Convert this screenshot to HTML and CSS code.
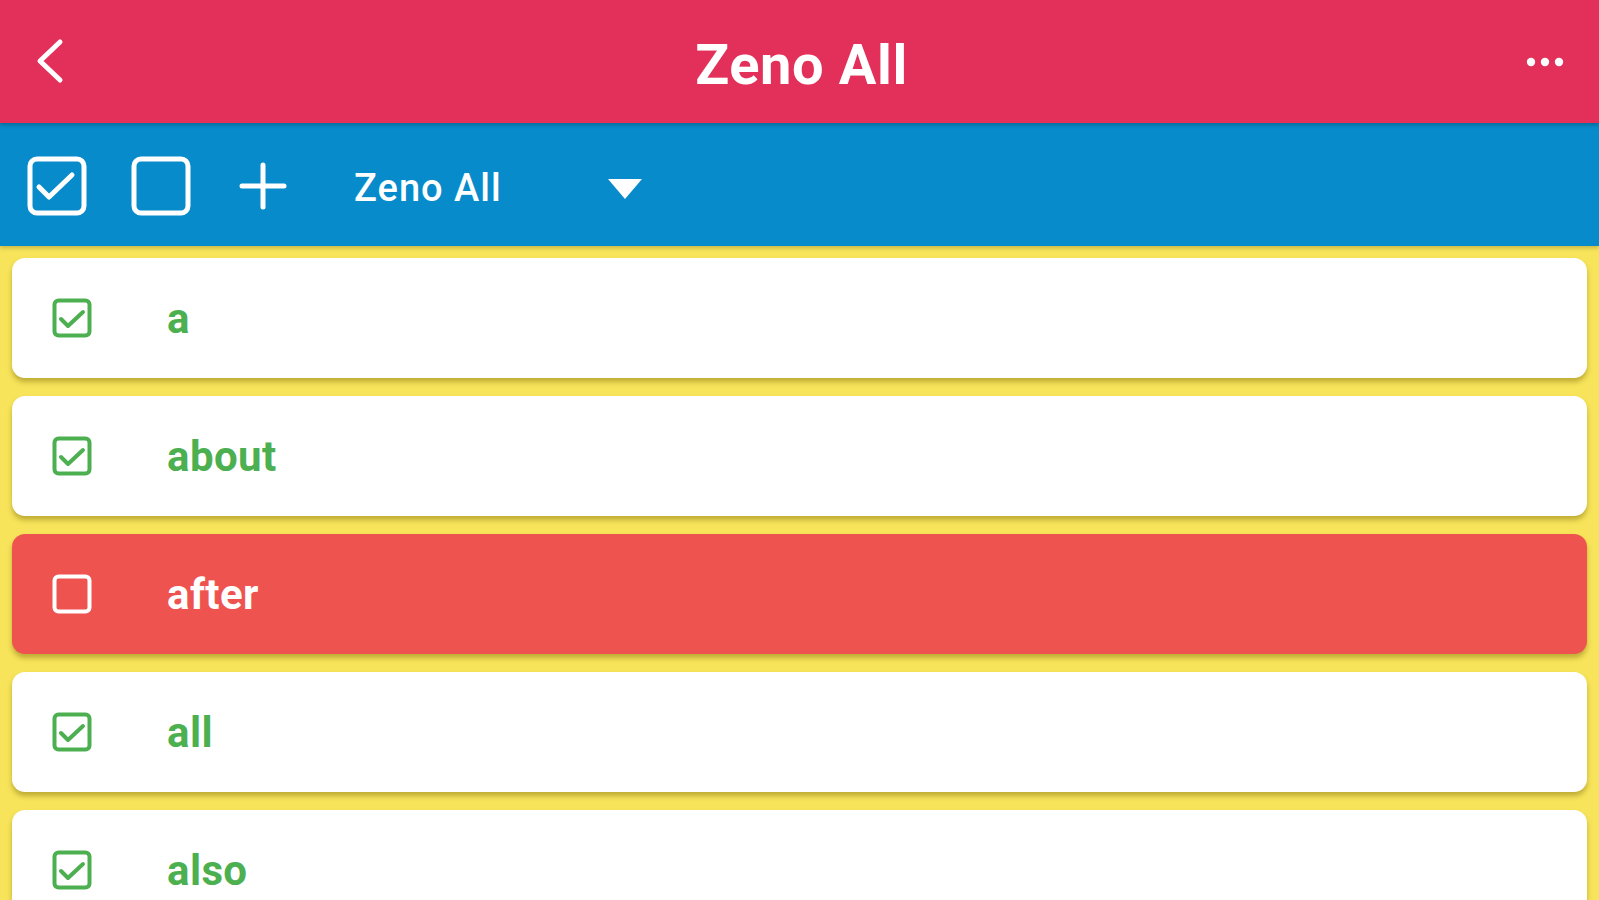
FILE: index.html
```html
<!DOCTYPE html>
<html lang="en">
<head>
<meta charset="utf-8">
<title>Zeno All</title>
<link rel="stylesheet" href="styles.css">
</head>
<body>
<div class="app">
  <header class="navbar">
    <button class="nav-btn back" aria-label="Back">
      <svg width="30" height="46" viewBox="0 0 30 46"><polyline points="25,4 5,23 25,42" fill="none" stroke="#fff" stroke-width="5" stroke-linecap="round" stroke-linejoin="round"/></svg>
    </button>
    <h1 class="title">Zeno All</h1>
    <button class="nav-btn more" aria-label="More">
      <svg width="38" height="12" viewBox="0 0 38 12"><circle cx="5" cy="6" r="4.2" fill="#fff"/><circle cx="19" cy="6" r="4.2" fill="#fff"/><circle cx="33" cy="6" r="4.2" fill="#fff"/></svg>
    </button>
  </header>

  <div class="toolbar">
    <button class="tool-btn" aria-label="Check all">
      <svg width="60" height="60" viewBox="0 0 60 60"><rect x="3" y="3" width="54" height="54" rx="7" fill="none" stroke="#fff" stroke-width="5"/><polyline points="12,31 22,41 45,19" fill="none" stroke="#fff" stroke-width="5" stroke-linecap="round" stroke-linejoin="round"/></svg>
    </button>
    <button class="tool-btn" aria-label="Uncheck all">
      <svg width="60" height="60" viewBox="0 0 60 60"><rect x="3" y="3" width="54" height="54" rx="7" fill="none" stroke="#fff" stroke-width="5"/></svg>
    </button>
    <button class="tool-btn plus" aria-label="Add">
      <svg width="48" height="48" viewBox="0 0 48 48"><line x1="24" y1="3" x2="24" y2="45" stroke="#fff" stroke-width="5" stroke-linecap="round"/><line x1="3" y1="24" x2="45" y2="24" stroke="#fff" stroke-width="5" stroke-linecap="round"/></svg>
    </button>
    <div class="select">
      <span class="select-label">Zeno All</span>
      <svg class="caret" width="36" height="22" viewBox="0 0 36 22"><polygon points="1,1 35,1 18,21" fill="#fff"/></svg>
    </div>
  </div>

  <main class="list">
    <div class="item done">
      <svg class="box" width="40" height="40" viewBox="0 0 40 40"><rect x="2.5" y="2.5" width="35" height="35" rx="4" fill="none" stroke="currentColor" stroke-width="4"/><polyline points="9,21 16,28 31,14" fill="none" stroke="currentColor" stroke-width="4" stroke-linecap="round" stroke-linejoin="round"/></svg>
      <span class="word">a</span>
    </div>
    <div class="item done">
      <svg class="box" width="40" height="40" viewBox="0 0 40 40"><rect x="2.5" y="2.5" width="35" height="35" rx="4" fill="none" stroke="currentColor" stroke-width="4"/><polyline points="9,21 16,28 31,14" fill="none" stroke="currentColor" stroke-width="4" stroke-linecap="round" stroke-linejoin="round"/></svg>
      <span class="word">about</span>
    </div>
    <div class="item todo">
      <svg class="box" width="40" height="40" viewBox="0 0 40 40"><rect x="2.5" y="2.5" width="35" height="35" rx="4" fill="none" stroke="currentColor" stroke-width="4"/></svg>
      <span class="word">after</span>
    </div>
    <div class="item done">
      <svg class="box" width="40" height="40" viewBox="0 0 40 40"><rect x="2.5" y="2.5" width="35" height="35" rx="4" fill="none" stroke="currentColor" stroke-width="4"/><polyline points="9,21 16,28 31,14" fill="none" stroke="currentColor" stroke-width="4" stroke-linecap="round" stroke-linejoin="round"/></svg>
      <span class="word">all</span>
    </div>
    <div class="item done">
      <svg class="box" width="40" height="40" viewBox="0 0 40 40"><rect x="2.5" y="2.5" width="35" height="35" rx="4" fill="none" stroke="currentColor" stroke-width="4"/><polyline points="9,21 16,28 31,14" fill="none" stroke="currentColor" stroke-width="4" stroke-linecap="round" stroke-linejoin="round"/></svg>
      <span class="word">also</span>
    </div>
  </main>
</div>
</body>
</html>
```

FILE: styles.css
```css
* { box-sizing: border-box; }

html, body {
  margin: 0;
  padding: 0;
  height: 100%;
}

body {
  font-family: Roboto, "Noto Sans", "Liberation Sans", sans-serif;
  background: #f7e45a;
  overflow: hidden;
}

.app {
  display: flex;
  flex-direction: column;
  height: 900px;
}

button {
  background: none;
  border: 0;
  padding: 0;
  margin: 0;
  cursor: pointer;
  display: flex;
  align-items: center;
  justify-content: center;
}

.navbar {
  height: 123px;
  flex: none;
  background: #e2305a;
  display: flex;
  align-items: center;
  justify-content: space-between;
  padding: 0 35px 0 35px;
  position: relative;
  z-index: 2;
  box-shadow: 0 2px 4px rgba(0, 0, 0, 0.25);
}

.nav-btn.back {
  width: 38px;
  height: 46px;
  margin-top: -1px;
  justify-content: flex-start;
}

.nav-btn.more {
  width: 38px;
  height: 12px;
  margin-top: 1px;
}

.title {
  margin: 6px 0 0 0;
  color: #fff;
  font-size: 56px;
  font-weight: 700;
  letter-spacing: 0.6px;
  flex: 1;
  text-align: center;
  line-height: 1;
  padding-left: 4px;
}

.toolbar {
  height: 123px;
  flex: none;
  background: #078bcb;
  display: flex;
  align-items: center;
  padding: 2px 0 0 27px;
  position: relative;
  z-index: 1;
  box-shadow: 0 2px 4px rgba(0, 0, 0, 0.2);
}

.tool-btn {
  width: 60px;
  height: 60px;
  margin-right: 44px;
}

.tool-btn.plus {
  width: 48px;
  height: 48px;
  margin-left: 4px;
  margin-right: 67px;
}

.select {
  display: flex;
  align-items: center;
  color: #fff;
}

.select-label {
  font-size: 38px;
  font-weight: 500;
  letter-spacing: 1px;
  width: 253px;
  margin-top: 4px;
}

.caret {
  margin-top: 6px;
}

.list {
  flex: 1;
  padding: 12px 12px 0 12px;
  display: flex;
  flex-direction: column;
  gap: 18px;
  overflow: hidden;
}

.item {
  flex: none;
  height: 120px;
  border-radius: 13px;
  background: #fff;
  display: flex;
  align-items: center;
  padding-left: 40px;
  gap: 75px;
  box-shadow: 0 4px 5px rgba(110, 90, 0, 0.4);
}

.item .box { flex: none; }

.item.done { color: #4caf50; }

.item.todo {
  background: #ee5350;
  color: #fff;
}

.word {
  font-size: 42px;
  font-weight: 700;
  letter-spacing: 0.4px;
  line-height: 1;
  margin-top: 2px;
}
```
